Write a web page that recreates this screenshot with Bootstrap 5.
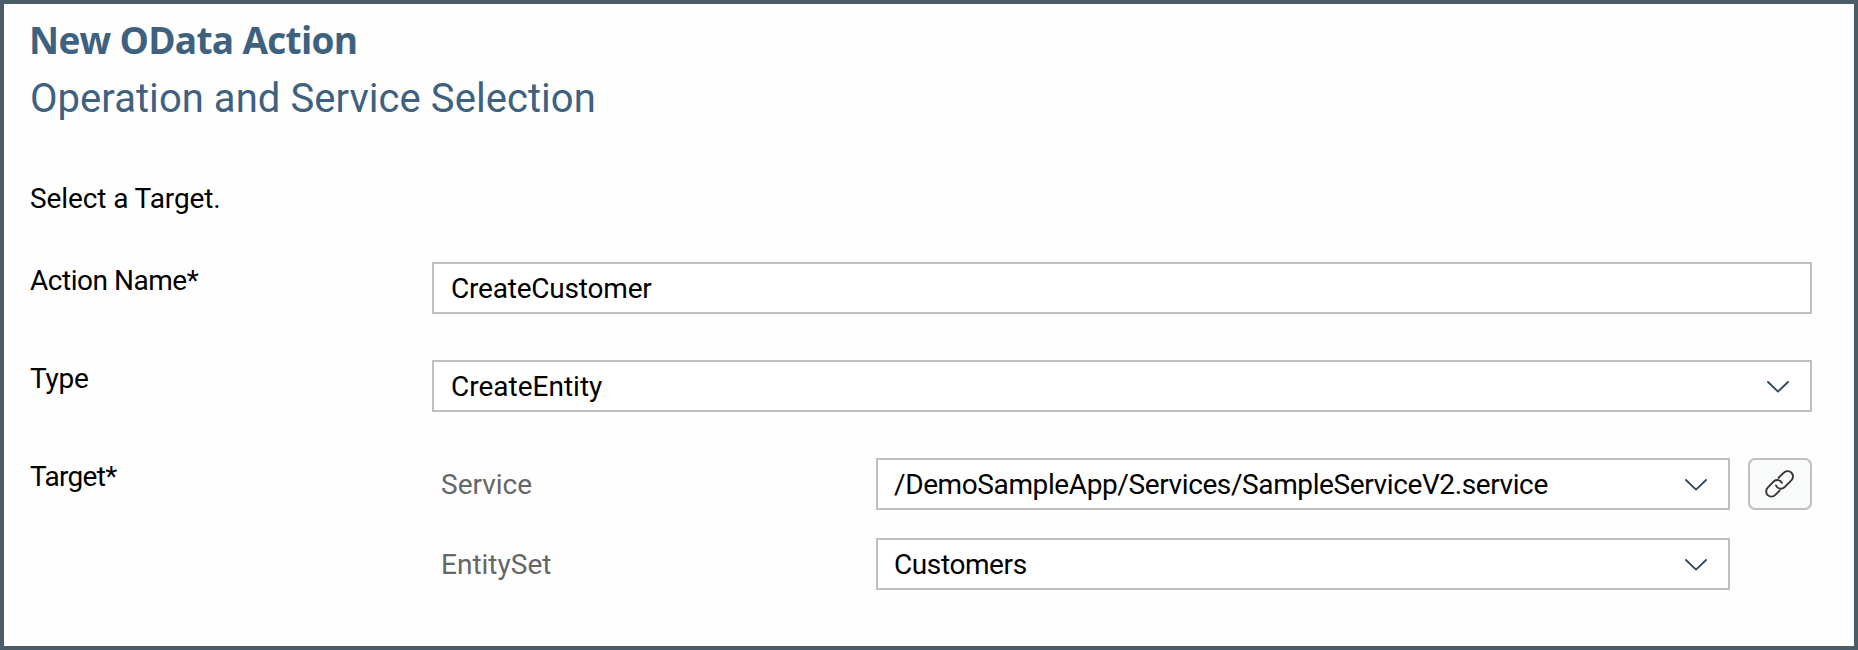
<!DOCTYPE html>
<html lang="en">
<head>
<meta charset="utf-8">
<meta name="viewport" content="width=device-width, initial-scale=1">
<title>New OData Action</title>
<link rel="stylesheet" href="https://cdn.jsdelivr.net/npm/bootstrap@5.3.0/dist/css/bootstrap.min.css">
<style>
  body { font: 28px/37px Roboto, "Liberation Sans", sans-serif; color: #000; letter-spacing: -.2px; }
  .wizard { border: 4px solid #4c5c66; height: 650px; padding: 7px 42px 0 26px; background: #fefefe; }
  .wizard-title { font: 700 37px/58px "Open Sans", sans-serif; letter-spacing: -.7px; color: #3f6180; margin: 0 0 0 -1px; }
  .wizard-subtitle { font-size: 40px; font-weight: 400; line-height: 58px; letter-spacing: .05px; color: #3f6180; margin: 1px 0 52px; }
  .hint { margin-bottom: 45px; letter-spacing: -.1px; }
  .field-row { margin-bottom: 46px; }
  .field-label { width: 402px; }
  .name-label { letter-spacing: -.47px; }
  .target-label { letter-spacing: -.7px; }
  .sub-label { width: 444px; padding-left: 9px; color: #666; letter-spacing: 0; }
  .field-box { height: 52px; border: 2px solid #bfbfbf; border-radius: 0; padding: 1px 21px 0 17px; font-size: 28px; line-height: 48px; color: #000; background: #fff; letter-spacing: inherit; }
  .target-box { flex: 0 0 854px; width: 854px; padding-left: 16px; }
  .entity-text { letter-spacing: 0; }
  .path-text { letter-spacing: -.39px; }
  .customers-text { letter-spacing: -.4px; }
  .link-btn { width: 64px; height: 52px; border: 2px solid #bfbfbf; border-radius: 7px; background: #f9fbfb; padding: 0; margin-left: 18px; }
  .target-rows { gap: 28px; }
</style>
</head>
<body>
<main class="wizard">
  <h1 class="wizard-title">New OData Action</h1>
  <h2 class="wizard-subtitle">Operation and Service Selection</h2>
  <p class="hint">Select a Target.</p>

  <div class="field-row d-flex align-items-start">
    <div class="field-label name-label flex-shrink-0">Action Name*</div>
    <div class="field-box form-control">CreateCustomer</div>
  </div>

  <div class="field-row d-flex align-items-start">
    <div class="field-label flex-shrink-0">Type</div>
    <div class="field-box form-control d-flex justify-content-between align-items-center">
      <span class="entity-text">CreateEntity</span>
      <svg width="22" height="12" viewBox="0 0 22 12" fill="none" stroke="#2f4a63" stroke-width="1.9" stroke-linecap="round" stroke-linejoin="round"><path d="M1 1 11 10.6 21 1"/></svg>
    </div>
  </div>

  <div class="d-flex align-items-start">
    <div class="field-label target-label flex-shrink-0">Target*</div>
    <div class="target-rows d-flex flex-column flex-grow-1">
      <div class="d-flex align-items-center">
        <div class="sub-label flex-shrink-0">Service</div>
        <div class="field-box target-box form-control d-flex justify-content-between align-items-center">
          <span class="path-text">/DemoSampleApp/Services/SampleServiceV2.service</span>
          <svg width="22" height="12" viewBox="0 0 22 12" fill="none" stroke="#2f4a63" stroke-width="1.9" stroke-linecap="round" stroke-linejoin="round"><path d="M1 1 11 10.6 21 1"/></svg>
        </div>
        <button type="button" class="link-btn btn d-flex align-items-center justify-content-center flex-shrink-0" aria-label="Link">
          <svg width="30" height="30" viewBox="0 0 30 30" fill="none" stroke="#333" stroke-width="1.9" stroke-linecap="round" stroke-linejoin="round"><path d="M13.5 8.9 18.6 3.8A5.2 5.2 0 0 1 26.5 11.2L19.4 18.3A5.2 5.2 0 0 1 11 16.5"/><path d="M16.8 13.8A5.2 5.2 0 0 0 9 12.2L2.7 18.7A5.2 5.2 0 0 0 10.1 26.1L14.6 21.6"/></svg>
        </button>
      </div>
      <div class="d-flex align-items-center">
        <div class="sub-label flex-shrink-0">EntitySet</div>
        <div class="field-box target-box form-control d-flex justify-content-between align-items-center">
          <span class="customers-text">Customers</span>
          <svg width="22" height="12" viewBox="0 0 22 12" fill="none" stroke="#2f4a63" stroke-width="1.9" stroke-linecap="round" stroke-linejoin="round"><path d="M1 1 11 10.6 21 1"/></svg>
        </div>
      </div>
    </div>
  </div>
</main>
<script src="https://cdn.jsdelivr.net/npm/bootstrap@5.3.0/dist/js/bootstrap.bundle.min.js"></script>
</body>
</html>
